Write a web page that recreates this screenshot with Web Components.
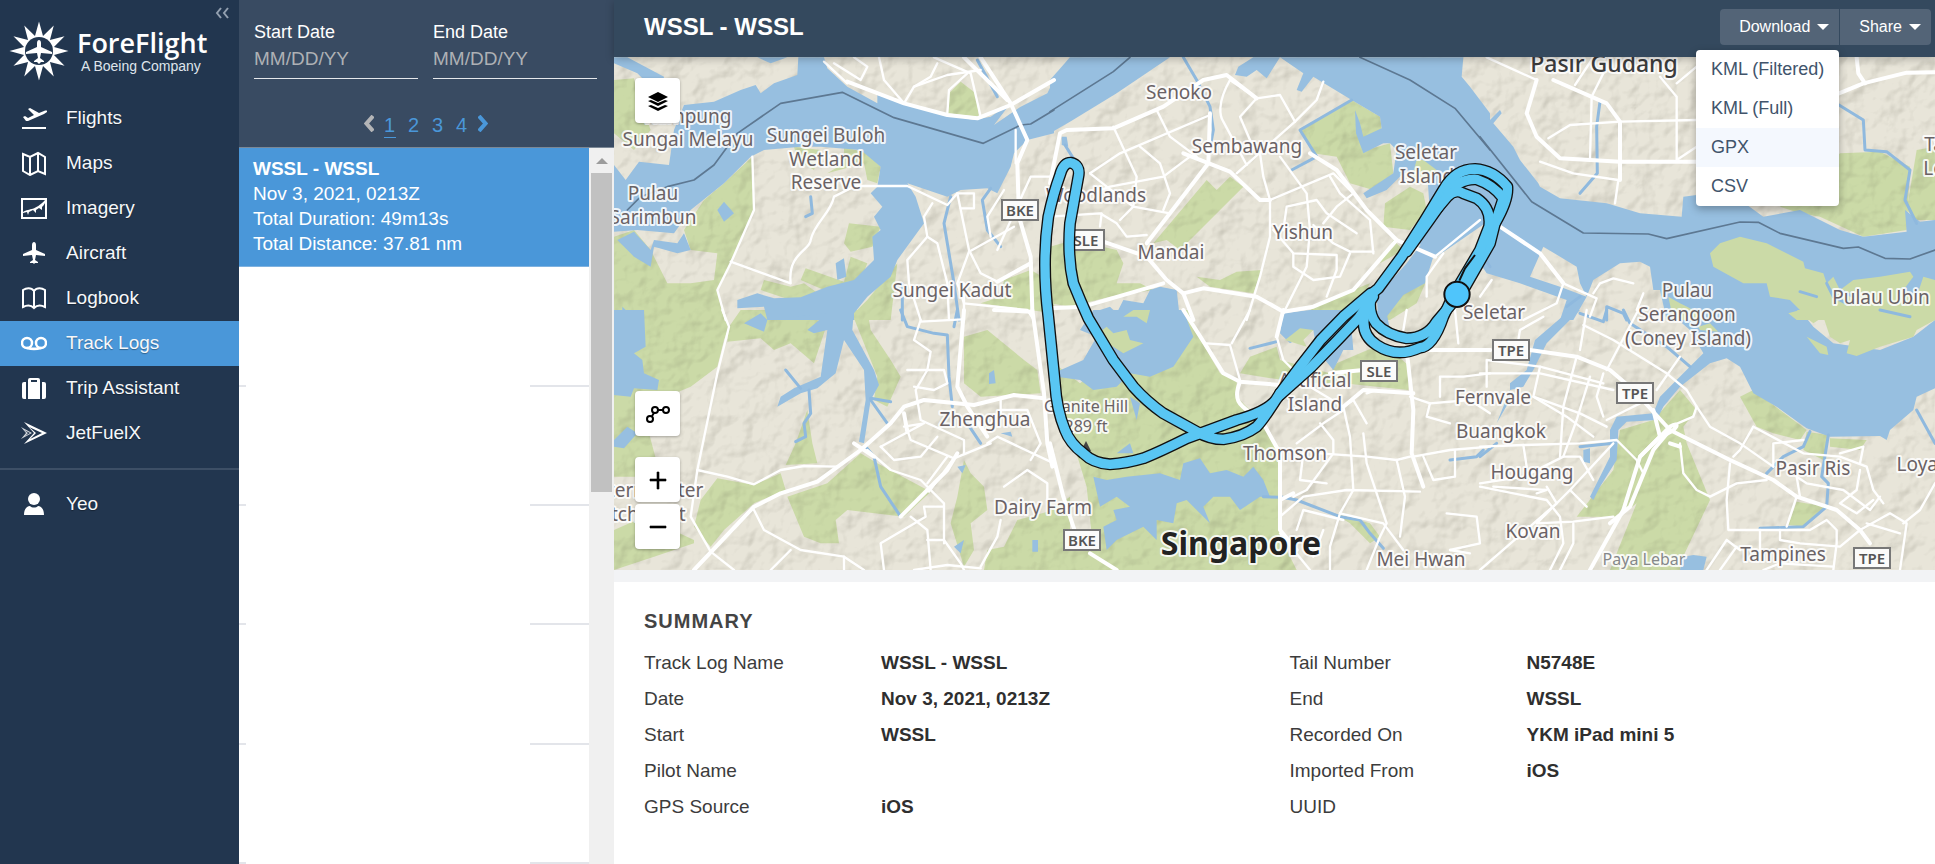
<!DOCTYPE html>
<html lang="en">
<head>
<meta charset="utf-8">
<meta name="viewport" content="width=device-width, initial-scale=1">
<title>ForeFlight - Track Logs</title>
<style>
  html, body { margin: 0; height: 100%; }
  body { font-family: "Liberation Sans", Arial, sans-serif; color: #333; background: #fff; }
</style>
</head>
<body>
<track-logs-app></track-logs-app>

<script>
const define = (name, html, setup) => {
  const template = document.createElement('template');
  template.innerHTML = html;
  customElements.define(name, class extends HTMLElement {
    constructor() {
      super();
      this.attachShadow({ mode: 'open' }).append(template.content.cloneNode(true));
      if (setup) setup.call(this, this.shadowRoot);
    }
  });
};

/* ---------- sidebar ---------- */

const icons = {
  flights: '<path d="M1 22h24v2H1z"/><path d="M2 12l2-1 3 2 6-3-6-6 2-1 9 5 5-2c3-1 4 0 3 1-1 1-2 1-3 2L7 16H5z"/>',
  maps: '<path d="M2 4l7 3 8-4 7 4v17l-7-3-8 4-7-4zM9 7v18M17 3v18" fill="none" stroke="currentColor" stroke-width="2"/>',
  imagery: '<path d="M1 4h24v19H1z" fill="none" stroke="currentColor" stroke-width="2"/><path d="M2 17c7-4 12-1 22-12v3c-1 2-2 3-3 4v3l-3-2-3 2v3l-3-3-4 2-1 3-1-3-4 1z"/>',
  aircraft: '<path d="M13 2c1 0 2 1 2 3v5l9 4v2l-9-1-1 5 3 2v1h-3l-1 1-1-1H9v-1l3-2-1-5-9 1v-2l9-4V5c0-2 1-3 2-3z"/>',
  logbook: '<path d="M13 6C10 2 5 3 2 5v17c4-2 8-2 11 1 3-3 7-3 11-1V5c-3-2-8-3-11 1zM13 6v17" fill="none" stroke="currentColor" stroke-width="2"/>',
  tracklogs: '<circle cx="6" cy="13" r="5" fill="none" stroke="currentColor" stroke-width="2.500"/><circle cx="20" cy="13" r="5" fill="none" stroke="currentColor" stroke-width="2.500"/><path d="M6 18c4 1 10 1 14 0" fill="none" stroke="currentColor" stroke-width="2.500"/>',
  trip: '<path d="M1 9q0-2 2-2h2v17H3q-2 0-2-2zM21 7h2q2 0 2 2v13q0 2-2 2h-2zM7 24V7V5q0-2 2-2h8q2 0 2 2v19zM10 5v2h6V5z" fill-rule="evenodd"/>',
  jet: '<path d="M3 2l23 11L3 24l10-11zm5 5l7 6-6 6 12-6z" fill-rule="evenodd"/><path d="M0 7l11 6-11 6 5-6zm3 3l4 3-3 3 5-3z" fill-rule="evenodd" opacity=".8"/>',
  user: '<circle cx="13" cy="8" r="6"/><path d="M3 24c0-6 3-9 6-9 2 2 6 2 8 0 3 0 6 3 6 9z"/>'
};

define('brand-logo', `
<style>
  :host { display: flex; align-items: center; gap: 8px; height: 60px; color: #fff; }
  svg { width: 60px; height: 60px; flex: none; }
  .text { display: flex; flex-direction: column; }
  .name { font: 600 27px/30px "Open Sans", "Noto Sans", sans-serif; }
  .sub { font-size: 14px; line-height: 16px; color: #dfe5ec; padding-left: 4px; }
</style>
<svg viewBox="-30 -30 60 60" aria-hidden="true">
  <path class="sun" fill="#fff"/>
  <circle r="14" fill="#22364f"/>
  <path fill="#fff" d="M0-11c1 0 2 1 2 3v4L13 1v2L2 2 1 7l4 3v1H2L0 13l-2-2h-3v-1l4-3-1-5-11 1V1l11-5v-4c0-2 1-3 2-3z"/>
</svg>
<div class="text"><span class="name">ForeFlight</span><span class="sub">A Boeing Company</span></div>`,
function (root) {
  const pts = [];
  for (let i = 0; i < 24; i++) {
    const r = i % 2 ? 15.5 : 29.5, a = i * Math.PI / 12;
    pts.push((r * Math.sin(a)).toFixed(2) + ' ' + (-r * Math.cos(a)).toFixed(2));
  }
  root.querySelector('.sun').setAttribute('d', 'M' + pts.join('L') + 'z');
});

define('nav-item', `
<style>
  :host { display: block; }
  a { box-sizing: border-box; display: flex; align-items: center; gap: 19px; height: 45px; padding: 0 0 2px 21px; color: #f6f8fa;
      text-decoration: none; font-size: 19px; text-shadow: 0 1px 1px rgba(0,0,0,.35); }
  :host([active]) a { background: #4a97d9; }
  svg { width: 26px; height: 26px; fill: #fff; color: #fff; }
</style>
<a href="#"><svg viewBox="0 0 26 26" aria-hidden="true"></svg><span><slot></slot></span></a>`,
function (root) {
  root.querySelector('svg').innerHTML = icons[this.getAttribute('icon')] || '';
});

define('side-bar', `
<style>
  :host { display: flex; flex-direction: column; position: relative; background: #22364f; }
  brand-logo { margin: 21px 0 15px 9px; }
  hr { width: 100%; border: 0; border-top: 2px solid #3d4f66; margin: 12px 0; }
  button { position: absolute; right: 8px; top: 4px; width: 18px; height: 18px; padding: 0; border: 0; background: none; }
  svg { display: block; width: 18px; height: 18px; fill: none; stroke: #93a0b0; stroke-width: 2; }
</style>
<button type="button" aria-label="Collapse menu"><svg viewBox="0 0 18 18"><path d="M8 4L4 9l4 5M15 4l-4 5 4 5"/></svg></button>
<brand-logo></brand-logo>
<nav aria-label="Main">
  <nav-item icon="flights">Flights</nav-item>
  <nav-item icon="maps">Maps</nav-item>
  <nav-item icon="imagery">Imagery</nav-item>
  <nav-item icon="aircraft">Aircraft</nav-item>
  <nav-item icon="logbook">Logbook</nav-item>
  <nav-item icon="tracklogs" active>Track Logs</nav-item>
  <nav-item icon="trip">Trip Assistant</nav-item>
  <nav-item icon="jet">JetFuelX</nav-item>
</nav>
<hr>
<nav-item icon="user">Yeo</nav-item>`);

/* ---------- list panel ---------- */

define('date-field', `
<style>
  :host { display: block; flex: 1; min-width: 0; }
  label { display: block; font-size: 18px; line-height: 20px; color: #fff; }
  input { display: block; box-sizing: border-box; width: 100%; height: 33px; margin-top: 4px; padding: 0 0 6px;
          border: 0; border-bottom: 1px solid #e6e8eb; border-radius: 0; background: none; color: #fff;
          font: 19px "Liberation Sans", Arial, sans-serif; outline: 0; }
  input::placeholder { color: #aeb1b5; opacity: 1; }
</style>
<label for="d"></label><input id="d" type="text" placeholder="MM/DD/YY">`,
function (root) { root.querySelector('label').textContent = this.getAttribute('label'); });

define('page-links', `
<style>
  :host { display: block; }
  nav { display: flex; justify-content: center; gap: 12px; }
  a { min-width: 12px; text-align: center; font-size: 20px; line-height: 24px; color: #4a97d9; text-decoration: none;
      border-bottom: 1px solid transparent; }
  a[aria-current] { border-color: #4a97d9; }
  .arrow { display: flex; align-items: center; min-width: 10px; margin: 0 -2px; padding-bottom: 4px; }
  svg { width: 10px; height: 17px; fill: none; stroke: currentColor; stroke-width: 4; }
  .off { color: #b4b5b7; }
</style>
<nav aria-label="Pages">
  <a class="arrow off" href="#" aria-label="Previous"><svg viewBox="0 0 10 17"><path d="M9 1L2.500 8.500 9 16"/></svg></a>
  <a href="#" aria-current="page">1</a><a href="#">2</a><a href="#">3</a><a href="#">4</a>
  <a class="arrow" href="#" aria-label="Next"><svg viewBox="0 0 10 17"><path d="M1 1l6.500 7.500L1 16"/></svg></a>
</nav>`);

define('log-list', `
<style>
  :host { display: flex; flex-direction: column; background: #fff; }
  header { background: #394b62; padding: 22px 17px 9px 15px; border-bottom: 1px solid #7b8896; }
  .dates { display: flex; gap: 15px; margin-bottom: 34px; }
  .body { flex: 1; display: flex; min-height: 0; }
  ul { flex: 1; list-style: none; margin: 0; padding: 0; display: grid; grid-auto-rows: minmax(auto, 1fr); }
  li { background: linear-gradient(#e3e5ea, #e3e5ea) 0 100% / 7px 2px no-repeat,
        linear-gradient(#e3e5ea, #e3e5ea) 100% 100% / 59px 2px no-repeat; }
  li.on { background: #4a97d9; padding: 8px 14px; color: #fff; border-bottom: 1px solid #7fb2e0; }
  p, h2 { margin: 0; font-size: 19px; line-height: 25px; }
  .bar { width: 25px; background: #f0f0f0; display: flex; flex-direction: column; align-items: center; }
  .up { width: 0; height: 0; margin: 10px 0 9px; border: 6px solid transparent; border-top: 0; border-bottom-color: #9c9c9c; }
  .thumb { width: 21px; flex: 0 1 319px; background: #c1c1c1; }
</style>
<header>
  <div class="dates"><date-field label="Start Date"></date-field><date-field label="End Date"></date-field></div>
  <page-links></page-links>
</header>
<div class="body">
  <ul>
    <li class="on"><h2>WSSL - WSSL</h2><p>Nov 3, 2021, 0213Z</p><p>Total Duration: 49m13s</p><p>Total Distance: 37.81 nm</p></li>
    <li></li><li></li><li></li><li></li><li></li>
  </ul>
  <div class="bar" aria-hidden="true"><div class="up"></div><div class="thumb"></div></div>
</div>`);

/* ---------- title bar ---------- */

define('menu-button', `
<style>
  :host { display: block; position: relative; }
  button { display: flex; align-items: center; gap: 7px; height: 36px; padding: 0 10px 0 19px; border: 0; color: #fff;
           background: #536477; font: 16px "Liberation Sans", Arial, sans-serif; border-radius: 0 4px 4px 0; }
  :host([first]) button { border-radius: 4px 0 0 4px; }
  i { border: 6px solid transparent; border-bottom: 0; border-top-color: #fff; }
</style>
<button type="button"><slot></slot><i></i></button>
<slot name="menu"></slot>`);

define('drop-menu', `
<style>
  :host { position: absolute; right: 0; top: 41px; z-index: 5; background: #fff; border-radius: 4px; overflow: hidden;
          box-shadow: 0 3px 8px rgba(0,0,0,.3); }
  a { display: block; height: 39px; line-height: 38px; padding: 0 15px; font-size: 18px; color: #41546b; text-decoration: none; white-space: nowrap; }
  .hover { background: #f4f8fe; }
</style>
<a href="#">KML (Filtered)</a><a href="#">KML (Full)</a><a href="#" class="hover">GPX</a><a href="#">CSV</a>`);

define('title-bar', `
<style>
  :host { display: flex; justify-content: space-between; align-items: center; padding: 9px 4px 12px 30px; background: #34495e;
          color: #fff; position: relative; z-index: 3; box-shadow: 0 2px 8px rgba(0,0,0,.25); }
  h1 { margin: 0; font-size: 24px; line-height: 36px; }
  .actions { display: flex; gap: 1px; }
</style>
<h1><slot></slot></h1>
<div class="actions">
  <menu-button first>Download<drop-menu slot="menu"></drop-menu></menu-button>
  <menu-button>Share</menu-button>
</div>`);

/* ---------- map ---------- */

/* Chart sheets: each has an origin on the map and its shapes at three units to a map unit. */
const sheets = [
  { at: [614, 50],
    green: ['M0 90L60 85 70 130 110 240 60 300 0 250z', 'M415 320L420 480 350 640 310 720 330 810H0V560L60 540 110 600 160 700 230 700 300 690 310 610 230 600 210 540 270 450 330 400z',
      'M540 290L620 300 600 360 550 330zM690 290L760 310 800 350 790 400 760 390 750 340 640 370 690 340z', 'M705 520L800 530 775 590 710 605 690 580z', 'M575 655L690 695 710 620 760 640 740 690 630 720 560 690z',
      'M450 690L530 710 570 700 640 750 560 760 440 720z', 'M850 640L830 810H700L760 750z', 'M1040 95L1085 130 1095 200 1000 190 1005 130z', 'M1170 690L1250 660 1320 700V790L1100 760 1160 740z'],
    water: ['M0 22H40L150 80 140 140 70 70 0 40z',
      'M553 22L550 75 480 100 440 130 425 105 380 120 300 155 210 165 180 240 165 345 75 335 35 390 0 345V545L70 540 180 550 230 480 330 400 410 320 450 300 560 290 620 290 740 300 800 350 790 410 770 430 805 470 780 500 800 540 775 560 780 630 720 690 640 710 560 742 480 745 430 730 370 750 370 775 450 770 460 810H720L720 790 760 740 830 680 850 630 930 520 905 440 880 400 1000 440 1040 420 1120 415 1150 430 1190 350 1200 310 1240 270 1320 250V90L1300 130 1220 170 1140 225 1190 160 1130 200 1080 210 1000 195 870 160 790 135 790 160 700 110 640 55 630 22z',
      'M430 22L470 40 520 22z', 'M10 570L60 545 110 600 120 570 190 580 210 550 230 600 190 610 120 590 110 650 60 620z', 'M310 480L330 455 360 490 330 515z', 'M665 640L690 625 697 680 670 690z', 'M25 770L45 790 40 810H25z'],
    streams: ['M575 500L595 490 590 440', 'M1010 440L990 520 1020 700 1035 810', 'M1130 415L1105 450 1120 540 1160 590', 'M865 700V810', 'M1090 30L1150 140'],
    roads: ['M415 320L420 480 350 640 310 720 335 810', 'M350 635L530 700C520 610 590 600 590 570 600 520 650 490 660 440L730 405', 'M730 408H880L1000 465 1030 430H1080V475H1040',
      'M955 460L930 500 940 560 880 630 885 700 920 810', 'M940 560L970 580 1000 700 1005 810', 'M1030 430L1065 600 1100 670 1150 695', 'M1065 605L1200 530', 'M1065 605L1030 700 1050 760', 'M1050 760L1240 780 1260 810', 'M1050 700V810',
      'M630 35L700 100', 'M660 40L740 90 760 50 720 22', 'M795 22L810 90 870 160 900 110 950 80 970 40', 'M900 110L1000 75 1100 60', 'M960 22L1070 70 1100 200', 'M1000 190L1005 120 1060 70', 'M1205 340V240', 'M1150 600L1250 380H1320', 'M1170 420L1120 500 1130 560'],
    main: ['M700 95L870 160 1000 195 1090 205 1190 165 1320 90', 'M1050 22L1180 150', 'M1100 22L1190 160 1240 270 1210 340 1215 500 1250 620 1255 780', 'M1250 640L1150 695'],
    border: ['M40 480L80 440 160 410 240 390 300 345 370 250 500 160 685 127 840 203 1108 280 1220 225 1250 222 1320 180'], over: [] },
  { at: [1050, 50],
    green: ['M540 380L580 410 390 600 350 570 310 580 470 390 500 420z', 'M0 590L70 570 200 600 220 640 200 700 270 700 310 720 180 740 60 770 0 760z', 'M440 680L510 690 560 665 635 660 610 730 480 710z',
      'M750 240L905 150 990 200 995 235 950 300 1020 280 1030 370 970 420 900 400 860 320 790 310z', 'M1080 410L1120 430 1130 480 1080 540 1000 530 1005 460z', 'M1030 570L1060 600 990 640z', 'M780 770L960 700 900 810H800z', 'M1060 720L1130 690 1100 760 1020 810H1000z'],
    water: ['M60 22H360L200 130 60 215 0 250V90z', 'M610 22L565 50 555 75 590 80 620 60 650 85 690 22 760 70 740 120 755 125 790 80 905 150 990 200 995 235 940 260 930 220 915 180 918 250 940 310 1000 280 1020 280 1040 300 1030 370 940 430 950 445 1010 420 1060 370 1130 350 1140 490 1080 560 1160 620 1320 510V190L1260 110 1235 80 1240 22z',
      'M1220 460L1130 560 1070 640 980 740 985 810 1010 800 1060 735 1125 700 1150 620 1230 560 1300 500z', 'M330 710L380 720 390 810H170L150 780 180 770 200 790 220 750 280 760 300 720z', 'M35 260H50L55 290 35 285z', 'M700 800L790 785 850 790 870 810z'],
    streams: ['M45 285L70 325', 'M400 22L440 90 480 170 490 240 475 320', 'M725 360L800 320 750 240 905 150', 'M1290 600L1320 650'],
    roads: ['M190 230L260 380 250 470 210 510', 'M320 180L360 260 440 320', 'M120 370L210 310 480 195', 'M270 290L330 340 360 430 340 480', 'M0 500L150 490 200 520 230 560 290 555', 'M420 320L340 380 180 410 100 440', 'M120 370L170 410 250 470 360 490', 'M155 490L150 530',
      'M540 90C500 160 510 200 520 215L590 345', 'M540 90L620 145 570 200 600 270 630 310 640 380 660 450', 'M620 145L690 135 735 215', 'M820 95L800 150 735 215 560 370', 'M690 320L770 430 780 540 770 650 700 790', 'M660 450L850 370 910 430 860 470 820 520',
      'M700 540L710 470 800 450 830 490 920 550', 'M840 380L870 430 960 510 970 610', 'M670 540L730 610 860 615 860 660 830 740', 'M790 525L850 580 900 605 970 605', 'M730 610V650L790 690 870 680 900 610', 'M660 450L660 560 630 680 590 810', 'M1180 610L1130 680 1130 740', 'M1155 620L1290 510'],
    main: ['M0 400L30 250 50 240 190 235 340 170 460 90 530 75 620 145', 'M480 190L475 340 360 490 290 580', 'M400 310L540 365 630 450 660 450', 'M160 575L290 620 350 690 400 730 430 810', 'M400 730L460 715 620 740 700 785 790 770 910 720 1040 570', 'M0 775L100 770 340 700', 'M780 310L860 360 950 480 1040 570 1155 620'],
    border: ['M0 185L190 65 240 22', 'M930 22L1080 90 1215 175 1320 300'], over: ['M1080 400L1100 330 1120 330 1160 360 1120 400z'] },
  { at: [1480, 50],
    green: ['M1080 310L1200 305 1290 350 1280 540 1150 560 1020 500 960 490 900 470z', 'M1310 300L1365 290V510H1310L1280 480z', 'M10 600L70 520 165 590 110 680 30 640z'],
    water: ['M0 165L30 210 60 180 65 190 40 220 100 290 120 330 175 400 180 410 240 445 380 460 480 490 605 500 610 440 650 435H760L850 500 960 480 1080 540 1150 560 1280 545 1275 480 1320 515 1365 510V810H560L540 720 520 720 510 650 480 635 420 640 340 690 320 740 300 700 290 650 190 590 150 680 240 710 320 740 280 810H240L260 750 120 700 20 670 0 640 50 520 30 480 0 470z'],
    streams: ['M1077 165L1150 210 1155 300 1220 305 1290 360 1275 450 1310 520', 'M360 155L350 230 352 370 300 430', 'M380 810L380 770 430 790 440 810', 'M260 770L300 740', 'M1010 740L960 725', 'M1040 700L1060 740 1100 760', 'M1200 780L1290 800', 'M1080 720L1120 740'],
    roads: ['M20 22L170 90', 'M340 22L285 105', 'M370 70L335 140 330 330', 'M540 80L590 140V330L650 290', 'M590 100L650 50', 'M205 265L270 225 420 215 650 210', 'M180 335L280 370 415 390 405 460', 'M190 620L250 700 230 760 130 810', 'M250 700L350 745 330 800', 'M340 730L360 700 400 685 460 700', 'M490 730L470 780', 'M0 740L35 690'],
    main: ['M220 90L380 160 420 215V390', 'M170 90L140 190 170 260 240 325 420 335H650', 'M1077 130L1150 100 1280 68 1365 67', 'M1130 22L1135 70 1155 100', 'M60 530L180 610 250 700'],
    border: ['M0 260L155 455 310 549 505 552 560 566 780 516 835 517 900 550 1090 595 1135 591 1215 625 1290 627 1365 600'],
    over: ['M690 610L720 580 780 560 860 580 970 635 975 655 1030 670 1040 700 1060 680 1080 720 1120 690 1200 680 1290 665 1300 680 1270 720 1310 740 1330 680 1365 690V810H950L925 790 960 780 930 750 870 740 860 700 790 700 700 650z', 'M565 740L600 760 660 790 650 810H580z'] },
  { at: [614, 310],
    green: ['M0 0H325L345 50 330 90 310 170 230 230 110 280 105 370 140 500 0 500z', 'M345 50L380 0H470L540 10 640 40 600 160 530 100 480 120 440 85 340 95z', 'M310 505L420 525 500 490 515 540 420 580 330 660 290 710 240 650 260 570z', 'M0 660L90 620 240 690 240 700 120 740 0 780z',
      'M520 560L640 520 740 430 790 460 950 545 870 620 700 600 665 630 675 700 620 700 570 680z', 'M710 0H760L770 60 830 150 860 200 820 290 780 270 790 200z', 'M545 400L580 300 595 400 610 460 515 465z', 'M1050 80L1120 60 1230 150 1270 180 1280 250 1100 260 1050 220z',
      'M1050 450L1070 490 1110 530 1120 600 1070 640 1080 720 1050 770 1010 640 1030 560z', 'M1210 630L1320 600V780H1110L1120 720 1170 710z'],
    water: ['M0 0H90L95 110 60 130 85 150 90 190 135 210 130 240 60 235 50 260 0 255z', 'M390 40L440 10 460 30 450 65z', 'M520 0H720L715 60 780 180 795 225 770 270 750 400 735 395 755 270 750 180 690 90 665 190 610 235 560 250 490 290 500 260 540 235 620 200 640 60 600 70 580 60 640 10 540 20z', 'M0 390L40 350 70 370 30 415 0 410z', 'M1125 190L1140 180 1145 220 1125 222z', 'M1030 470L1055 465 1045 490zM1020 710L1050 690 1040 730zM1160 370L1190 365 1195 380zM1255 690L1272 690V725H1255z'],
    streams: ['M515 180L560 235', 'M585 240L590 310 570 340 575 380 545 395', 'M770 265L830 275', 'M770 270L820 340', 'M860 0L880 50 960 70 1000 75 1005 200 1015 290', 'M755 410L780 440 800 530 860 620', 'M1030 0L1020 50', 'M1060 340L1100 400'],
    roads: ['M325 0L345 50 310 190 250 480 230 620 290 725 360 780', 'M250 480L340 500 420 523 500 480 570 468 670 470', 'M760 420L830 480 920 510 990 580 990 700', 'M920 30L900 90 950 125 940 180 905 240 920 330 1050 390V430', 'M920 35L1045 28', 'M880 180H990L1000 220 960 240 900 230', 'M880 360L890 390 1020 445 1130 400', 'M800 410L930 340 870 350',
      'M800 410L840 450 920 440 970 380', 'M940 520L1000 440', 'M945 545L1020 445', 'M990 590H930L935 620 800 700 810 780', 'M890 620L940 660 950 780', 'M990 690H940', 'M990 690L1040 760 1050 780', 'M1120 400L1150 380 1320 460', 'M1250 450L1280 400 1240 300 1160 300 1130 340', 'M1170 530L1240 480 1300 520V570', 'M420 600L450 660 560 720 690 740 750 780', 'M470 780L530 720', 'M690 740V780', 'M1160 630L1150 680 1100 770', 'M900 780L1000 765 1100 775', 'M1160 270V310'],
    main: ['M240 780L420 590 500 550 610 515 740 420 830 340 870 290 930 270 1080 285 1200 255 1290 265', 'M720 400L780 440', 'M1050 0L1030 230 1060 290 1120 380', 'M1255 0L1290 250 1300 400 1315 470', 'M870 310L880 365', 'M860 620L1000 480 1030 430', 'M1140 0L1255 5'],
    border: [], over: [] },
  { at: [1050, 310],
    green: ['M0 150L90 220 180 150 260 0H420L440 70 510 190 560 210 560 260 640 340 690 420 690 680 740 780H160L130 720 110 530 70 400 40 300z', 'M0 600L60 560 60 660 200 780H0z', 'M600 140L680 110 690 150 840 190 860 160 1000 100 1080 170 1075 240 880 220 760 220 570 190z', 'M850 610L960 640 990 680 960 700 900 640z'],
    water: ['M130 0H400L430 80 370 170 300 200 240 190 200 230 130 240 90 210 20 200 10 190 100 150 140 80 90 60z', 'M700 10L780 0H900L910 120 880 120 850 180 800 120 790 60 720 100 690 70z', 'M130 500L170 510 230 500 330 490 390 510 400 460 450 445 480 490 530 480 580 500 610 470 640 510 660 560 630 560 570 600 540 560 490 560 460 590 480 640 410 570 380 580 370 640 320 630 320 690 280 650 200 690 170 720 160 650 200 630 190 600 240 590 200 560 150 590z', 'M240 260L270 280 260 330zM200 430L240 400 250 430z', 'M970 0L1010 10 1020 60 980 40z'],
    streams: ['M600 115L680 95', 'M690 560L740 570 870 620 930 630 960 670 1000 715', 'M1200 450L1280 440 1300 420', 'M640 560L690 562'],
    roads: ['M470 100L540 105 570 210', 'M600 0L545 100', 'M700 0L680 80 700 150 780 230 880 290 900 380 910 540 870 610', 'M880 290L910 270 950 340', 'M740 400L820 340 880 300', 'M810 340L850 390 850 430 770 540 730 560', 'M810 430L950 440 1040 450 1080 440', 'M690 620L760 560 890 540 1110 545', 'M940 370L950 460 1010 640 990 680 950 780', 'M870 610L1000 640 1060 720', 'M870 610L840 710 840 780', 'M740 660L760 600 880 630',
      'M760 430L750 510 830 520', 'M1040 450L1065 560 1050 680', 'M1070 0L1060 60', 'M1215 0L1225 100', 'M1170 260V200H1240L1320 190', 'M1080 260L1140 280 1260 270 1320 310', 'M1140 280L1130 320 1200 340', 'M1090 440L1200 420 1320 410', 'M1120 440L1150 510 1215 500V420', 'M1190 610L1280 620 1290 700 1200 720', 'M950 250L980 240', 'M1200 720L1260 730', 'M690 670L780 780', 'M820 660L790 740'],
    main: ['M400 0L470 110 520 190 570 215 690 225', 'M570 215C540 290 590 290 640 340L690 430V660L740 720', 'M700 0L680 80', 'M1075 120H1320', 'M1070 120L1090 300 1085 430 1120 530', 'M840 190L940 180', 'M880 290L940 240 1090 250', 'M690 570L730 550', 'M0 400L40 560 80 680', 'M120 730L200 780'],
    border: [], over: ['M130 80L170 50 190 70 230 60 240 90 280 100 220 130 190 110z', 'M705 90L750 55 790 60 760 90 770 110z', 'M220 20L250 0H300L290 40 260 20z'] },
  { at: [1480, 310],
    green: ['M420 360L520 330 600 240 650 300 610 350 620 400 690 570 600 760 600 780H390L470 580 420 620 290 620 400 480z', 'M820 240L900 300 980 360 960 390 880 370 830 350 780 260z', 'M980 365L1045 375 1030 450 970 420z', 'M950 575L1040 590 970 650 925 645z', 'M1050 385L1160 390 1140 420 1050 410z'],
    water: ['M270 0H300L260 40 200 100 160 180 130 230 90 240 50 340 90 270 90 220 140 180 165 90z', 'M560 0H960L1000 50 1060 100 1200 120 1300 80 1365 30V235L1310 260 1300 300 1230 360 1220 390 1200 378 1050 380 980 355 890 290 820 250 780 170 740 145 690 160 600 230 550 290 530 330 440 335 415 360 410 450 360 530 340 570 330 560 390 440 390 360 410 320 520 310 540 260 610 190 670 130 630 60z', 'M610 740L640 735 680 740 670 780H600zM310 420L330 415 330 460 310 455z'],
    streams: ['M300 10L370 35 380 0', 'M430 0L450 40 560 110 630 170', 'M300 410L400 400', 'M990 365L970 410 910 440 860 490', 'M1045 375L1025 500 1045 520 1040 590 970 650 840 655', 'M1310 300L1365 400', 'M0 440L50 400'],
    roads: ['M115 90L120 60 190 20', 'M300 120L320 0', 'M290 140L250 290 240 440', 'M20 230V150L180 170 370 220', 'M0 190L180 190 400 240', 'M180 170L160 260 300 310 380 350', 'M160 260L260 320 340 380', 'M330 200L290 330 250 440', 'M370 190L350 260 370 320', 'M0 410L130 405 300 400 410 390 470 450 490 490', 'M0 520L130 500 250 440 300 440 340 510', 'M0 530L200 570 240 620 250 700 210 780', 'M200 530L230 580 0 780', 'M270 540L320 590', 'M400 400L270 540 170 640 280 635 400 620', 'M280 640V700L240 780', 'M380 330L440 300 480 280', 'M130 405L140 470', 'M40 530L200 540 170 550',
      'M310 45L400 90 560 190 620 240 650 290 690 350 780 400 880 470', 'M650 290L640 320 570 350', 'M600 140L530 240', 'M475 0L380 180', 'M820 350L780 420 760 440', 'M820 350L970 430 1080 440 1160 470 1180 540 1210 580', 'M970 390L880 400V470', 'M600 400L610 490 650 540 690 560 770 520 860 510', 'M750 460L740 570 745 660H990L1040 630 1070 660V700L1060 780', 'M950 560L920 650', 'M900 660V690L960 700 1080 710 1140 660 1230 610 1280 640 1260 780', 'M840 660V720', 'M740 690L680 780M770 710L720 780M740 690L780 720', 'M950 500L980 520 1090 540 1170 600 1200 560', 'M1080 430L1150 410 1140 460', 'M1140 480L1130 540 1080 580 1130 610 1180 570', 'M1365 520L1320 600 1270 640', 'M1160 640L1260 670', 'M960 560L950 500', 'M850 780L900 760 1060 770'],
    main: ['M0 120H30M150 120L290 140 390 180 460 240 570 360 750 450 880 510 950 560 1070 600 1140 660', 'M540 380C600 360 600 330 570 350L480 440 430 600 330 780', 'M570 360L520 420 450 590 390 640', 'M520 300L540 380 480 440', 'M1140 660L1170 700', 'M570 400L600 410'],
    border: [], over: ['M980 80L1040 110 1045 135 1020 130z', 'M950 0H1365V30L1310 60 1300 80 1200 110 1130 138 1100 130 1110 90 1080 100 1050 80 1030 20 1000 40z', 'M655 50L690 40 715 65 660 60z'] }
];

const track = [
  'M960 735L985 715 1055 620 1125 510 1180 420Q1215 357 1275 357 1330 360 1372 410 1376 450 1335 520L1320 580 1240 720 1160 815Q1130 865 1070 865 1010 855 978 820 955 790 962 745',
  'M1070 605L1138 510 1190 436Q1225 385 1280 388 1330 405 1360 445L1335 520',
  'M1128 515L1192 440Q1215 415 1240 430L1280 445Q1325 475 1317 530L1290 600 1210 735 1180 800Q1150 890 1110 893 1040 925 980 885 925 850 948 780L965 740',
  'M690 1030L750 950 812 870 880 800 962 730',
  'M690 1035L785 950 863 870 925 805 970 740',
  'M690 1030Q670 1080 560 1110L410 1165Q330 1205 280 1225 230 1240 180 1243 130 1240 100 1210 60 1180 45 1140 20 1080 15 1000L-5 800Q-25 640-5 500 10 430 30 375 40 338 62 338 90 345 86 375L60 520Q52 620 70 700 90 750 115 805L190 930 250 1010Q290 1055 340 1090L440 1145Q480 1168 520 1168 580 1160 620 1130 640 1110 690 1030'
];

const labels = [
  ['Kampung', 688, 123], ['Sungai Melayu', 688, 146], ['Sungei Buloh', 826, 142], ['Wetland', 826, 166], ['Reserve', 826, 189],
  ['Pulau', 653, 200], ['Sarimbun', 653, 224], ['Sungei Kadut', 952, 297], ['Senoko', 1179, 99], ['Sembawang', 1247, 153],
  ['Woodlands', 1096, 202], ['Mandai', 1171, 259], ['Yishun', 1303, 239], ['Seletar', 1426, 159], ['Island', 1427, 183],
  ['Seletar', 1494, 319], ['Pulau', 1687, 297], ['Serangoon', 1687, 321], ['(Coney Island)', 1688, 345], ['Pulau Ubin', 1881, 304],
  ['Ta', 1934, 151], ['Lo', 1934, 175], ['Zhenghua', 985, 426], ['Western Water', 637, 497], ['Catchment', 637, 521],
  ['Dairy Farm', 1043, 514], ['Thomson', 1285, 460], ['Artificial', 1315, 387], ['Island', 1315, 411], ['Mei Hwan', 1421, 566],
  ['Fernvale', 1493, 404], ['Buangkok', 1501, 438], ['Hougang', 1532, 479], ['Kovan', 1533, 538], ['Pasir Ris', 1813, 475],
  ['Tampines', 1783, 561], ['Loyang', 1929, 471],
  ['Granite Hill', 1086, 412, 'small'], ['289 ft', 1086, 432, 'small'], ['Paya Lebar', 1644, 565, 'small faint'],
  ['Pasir Gudang', 1604, 72, 'town'], ['Singapore', 1241, 555, 'city']
];
const shields = [['BKE', 1020, 210], ['SLE', 1086, 240], ['BKE', 1082, 540], ['SLE', 1379, 371], ['TPE', 1511, 350], ['TPE', 1635, 393], ['TPE', 1872, 558]];

const layer = (key, cls) => `<g class="${cls}">` + sheets.map(s =>
  `<g transform="translate(${s.at}) scale(.33333)">` + s[key].map(d => `<path d="${d}"/>`).join('') + '</g>').join('') + '</g>';

define('track-map', `
<style>
  :host { display: block; position: relative; overflow: hidden; background: #e8e5d9; }
  .chart { position: absolute; inset: 0; width: 100%; height: 100%; }
  .green { fill: #cbdaa7; } .water { fill: #97bfe0; }
  .streams, .roads, .main, .border { fill: none; stroke-linejoin: round; stroke-linecap: round; }
  .streams { stroke: #8fb9de; stroke-width: 9; }
  .roads { stroke: #fff; stroke-width: 7; }
  .main { stroke: #fff; stroke-width: 12; }
  .border { stroke: #5d7892; stroke-width: 5; }
  .outline, .line { fill: none; stroke-linejoin: round; stroke-linecap: round; }
  .outline { stroke: #111; stroke-width: 36; } .line { stroke: #59c6f3; stroke-width: 28; }
  text { font: 19px "Noto Sans", sans-serif; fill: #6a6265; text-anchor: middle; paint-order: stroke; stroke: rgba(255,255,255,.85); stroke-width: 4px; stroke-linejoin: round; }
  text.small { font-size: 16px; } text.faint { fill: #85888a; }
  text.town { font-size: 23px; fill: #3c3c3c; font-weight: 500; }
  text.city { font-size: 32px; font-weight: 700; fill: #222; }
  .shield rect { fill: #fbfbfa; stroke: #777; stroke-width: 2; }
  .shield text { font-size: 15px; font-weight: 600; fill: #555; stroke: none; }
  .tools { position: absolute; left: 21px; top: 21px; bottom: 21px; display: flex; flex-direction: column; pointer-events: none; }
  button { width: 45px; height: 45px; padding: 0; border: 0; border-radius: 4px; background: #fff; box-shadow: 0 1px 3px rgba(0,0,0,.3);
           display: grid; place-items: center; pointer-events: auto; }
  .route { margin: auto 0 21px; } .in { margin-bottom: 2px; }
  button svg { width: 24px; height: 24px; }
</style>
<svg class="chart" viewBox="614 57 1321 513" preserveAspectRatio="xMidYMid slice" role="img" aria-label="Track over Singapore">
  <defs>
    <filter id="relief" x="0" y="0" width="100%" height="100%" color-interpolation-filters="sRGB">
      <feTurbulence type="fractalNoise" baseFrequency=".04" numOctaves="3" seed="8"/>
      <feColorMatrix values="0 0 0 0 0  0 0 0 0 0  0 0 0 0 0  1 0 0 0 0"/>
      <feDiffuseLighting surfaceScale="5" diffuseConstant="1" lighting-color="#fff"><feDistantLight azimuth="225" elevation="55"/></feDiffuseLighting>
      <feColorMatrix values="0 0 0 0 .35  0 0 0 0 .34  0 0 0 0 .28  -1.600 0 0 0 1.350"/>
    </filter>
  </defs>
  ${layer('green', 'green')}
  <rect x="614" y="57" width="1321" height="513" filter="url(#relief)" opacity=".24"/>
  ${layer('water', 'water')}${layer('over', 'green')}${layer('streams', 'streams')}${layer('border', 'border')}${layer('roads', 'roads')}${layer('main', 'main')}
  ${shields.map(([t, x, y]) => `<g class="shield"><rect x="${x - 18}" y="${y - 10}" width="36" height="20"/><text x="${x}" y="${y + 6}">${t}</text></g>`).join('')}
  <path d="M1081 451l5-10 5 10z" fill="#444"/>
  ${labels.map(([t, x, y, c]) => `<text x="${x}" y="${y}" class="${c || ''}">${t}</text>`).join('')}
  <g transform="translate(1050 50) scale(.33333)">
    <g class="outline">${track.map(d => `<path d="${d}"/>`).join('')}</g>
    <g class="line">${track.map(d => `<path d="${d}"/>`).join('')}</g>
    <path d="M1228 692L1245 655 1275 615" fill="none" stroke="#111" stroke-width="6"/>
    <circle cx="1221" cy="733" r="38" fill="#4fc5fb" stroke="#111" stroke-width="6"/>
  </g>
</svg>
<div class="tools">
  <button type="button" aria-label="Layers"><svg viewBox="0 0 24 24"><path d="M12 3l10 5-10 5L2 8z"/><path d="M2 12l3-1 7 3 7-3 3 1-10 5zM2 17l3-1 7 3 7-3 3 1-10 5z"/></svg></button>
  <button type="button" class="route" aria-label="Route"><svg viewBox="0 0 24 24" fill="none" stroke="#000" stroke-width="2"><circle cx="4" cy="17" r="3"/><circle cx="9" cy="8" r="3"/><circle cx="20" cy="8" r="3"/><path d="M6 14l2-3M12 8h5"/></svg></button>
  <button type="button" class="in" aria-label="Zoom in"><svg viewBox="0 0 24 24"><path d="M4 11h16v2H4zM11 4h2v17h-2z" stroke="#000" stroke-width=".6"/></svg></button>
  <button type="button" aria-label="Zoom out"><svg viewBox="0 0 24 24"><path d="M4 11h16v2H4z" stroke="#000" stroke-width=".6"/></svg></button>
</div>`);

/* ---------- summary ---------- */

define('log-summary', `
<style>
  :host { display: block; border-top: 12px solid #f2f3f5; padding: 27px 0 39px 30px; background: #fff; }
  h2 { margin: 0 0 12px; font-size: 20px; line-height: 24px; letter-spacing: 1px; color: #444; }
  .cols { display: grid; grid-template-columns: 1fr 1fr; }
  dl { display: grid; grid-template-columns: 237px 1fr; grid-auto-rows: 36px; align-items: center; margin: 0; font-size: 19px; }
  dt { color: #3c3c3c; }
  dd { margin: 0; font-weight: 700; color: #2f2f2f; }
</style>
<h2>SUMMARY</h2>
<div class="cols">
  <dl>
    <dt>Track Log Name</dt><dd>WSSL - WSSL</dd>
    <dt>Date</dt><dd>Nov 3, 2021, 0213Z</dd>
    <dt>Start</dt><dd>WSSL</dd>
    <dt>Pilot Name</dt><dd></dd>
    <dt>GPS Source</dt><dd>iOS</dd>
  </dl>
  <dl>
    <dt>Tail Number</dt><dd>N5748E</dd>
    <dt>End</dt><dd>WSSL</dd>
    <dt>Recorded On</dt><dd>YKM iPad mini 5</dd>
    <dt>Imported From</dt><dd>iOS</dd>
    <dt>UUID</dt><dd></dd>
  </dl>
</div>`);

define('track-logs-app', `
<style>
  :host { display: grid; grid-template-columns: 239px 375px minmax(0, 1fr); min-height: 100vh; }
  main { display: flex; flex-direction: column; min-width: 0; }
  track-map { flex: 1; min-height: 320px; }
</style>
<side-bar></side-bar>
<log-list></log-list>
<main>
  <title-bar>WSSL - WSSL</title-bar>
  <track-map></track-map>
  <log-summary></log-summary>
</main>`);
</script>
</body>
</html>
